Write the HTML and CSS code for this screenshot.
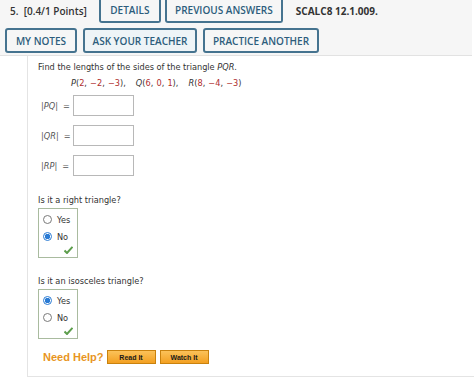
FILE: index.html
```html
<!DOCTYPE html>
<html lang="en">
<head>
    <meta charset="UTF-8">
    <title>SCALC8 12.1.009</title>
    <link rel="stylesheet" href="styles.css">
</head>
<body>
    <div class="header">
        <div class="head-row top">
            <span class="points">5.&nbsp; [0.4/1 Points]</span>
            <span class="btn w-details">DETAILS</span>
            <span class="btn w-prev">PREVIOUS ANSWERS</span>
            <span class="code">SCALC8 12.1.009.</span>
        </div>
        <div class="head-row">
            <span class="btn w-notes">MY NOTES</span>
            <span class="btn light w-ask">ASK YOUR TEACHER</span>
            <span class="btn w-practice">PRACTICE ANOTHER</span>
        </div>
    </div>

    <div class="question">
        <p class="prompt">Find the lengths of the sides of the triangle <i>PQR</i>.</p>
        <p class="points-line">
            <i>P</i>(<span class="num">2</span>, <span class="num">&minus;2</span>, <span class="num">&minus;3</span>),
            <span class="sp"></span><i>Q</i>(<span class="num">6</span>, <span class="num">0</span>, <span class="num">1</span>),
            <span class="sp"></span><i>R</i>(<span class="num">8</span>, <span class="num">&minus;4</span>, <span class="num">&minus;3</span>)
        </p>

        <div class="answer-row"><span class="label">|<i>PQ</i>|&nbsp; =</span><span class="box"></span></div>
        <div class="answer-row"><span class="label">|<i>QR</i>|&nbsp; =</span><span class="box"></span></div>
        <div class="answer-row"><span class="label">|<i>RP</i>|&nbsp; =</span><span class="box"></span></div>

        <p class="ask first">Is it a right triangle?</p>
        <div class="choices">
            <div class="choice"><span class="radio"></span>Yes</div>
            <div class="choice"><span class="radio on"></span>No</div>
            <svg class="check" width="9" height="8" viewBox="0 0 9 8"><path d="M0.5 4.5 L3 7 L8.5 0.8" fill="none" stroke="#5d9e4c" stroke-width="2"/></svg>
        </div>

        <p class="ask">Is it an isosceles triangle?</p>
        <div class="choices">
            <div class="choice"><span class="radio on"></span>Yes</div>
            <div class="choice"><span class="radio"></span>No</div>
            <svg class="check" width="9" height="8" viewBox="0 0 9 8"><path d="M0.5 4.5 L3 7 L8.5 0.8" fill="none" stroke="#5d9e4c" stroke-width="2"/></svg>
        </div>

        <div class="help">
            <span class="need">Need Help?</span>
            <span class="help-btn">Read It</span>
            <span class="help-btn">Watch It</span>
        </div>
    </div>
</body>
</html>
```

FILE: styles.css
```css
body {
    margin: 0;
    background: #ffffff;
    font-family: "Open Sans", "DejaVu Sans", sans-serif;
    color: #333333;
    overflow: hidden;
}
.header {
    width: 472px;
    height: 57px;
    background: #f6f6f6;
    border-bottom: 1px solid #e2e2e2;
}
.head-row {
    display: flex;
    align-items: center;
    gap: 6px;
    padding-left: 5px;
    height: 25px;
}
.head-row.top {
    margin-top: -2px;
    padding-left: 10px;
    margin-bottom: 5px;
    gap: 4px;
}
.points {
    font-size: 10px;
    font-weight: 600;
    color: #333333;
    margin-right: 8px;
}
.code {
    font-size: 10px;
    font-weight: 700;
    color: #333333;
    margin-left: 9px;
}
.btn {
    display: flex;
    align-items: center;
    justify-content: center;
    box-sizing: border-box;
    height: 25px;
    border: 2px solid #45738f;
    border-radius: 3px;
    background: #f6f6f6;
    color: #2d5d7c;
    font-size: 10px;
    font-weight: 600;
    white-space: nowrap;
}
.head-row.top .btn {
    border-top: none;
    border-radius: 0 0 3px 3px;
}
.btn.light {
    background: #eef4f7;
}
.w-details { width: 62px; }
.w-prev { width: 118px; }
.w-notes { width: 72px; }
.w-ask { width: 114px; }
.w-practice { width: 116px; }
.question {
    margin-left: 27px;
    border-left: 1px solid #e4e4e4;
    border-bottom: 1px solid #e4e4e4;
    padding: 6px 0 0 10px;
    height: 314px;
    font-family: "DejaVu Sans", Verdana, sans-serif;
    font-size: 8.2px;
    color: #333333;
}
.prompt {
    margin: 0;
    line-height: 11px;
}
.points-line {
    margin: 5px 0 0 33px;
    line-height: 11px;
    white-space: nowrap;
    word-spacing: 0.5px;
}
.num {
    color: #b02e2e;
}
.sp {
    display: inline-block;
    width: 7px;
}
.answer-row {
    display: flex;
    align-items: center;
    margin: 6px 0 0 3px;
    height: 21px;
}
.answer-row + .answer-row {
    margin-top: 9px;
}
.label {
    width: 32px;
    color: #555555;
}
.box {
    box-sizing: border-box;
    width: 61px;
    height: 21px;
    border: 1px solid #b8b8b8;
    background: #ffffff;
}
.ask {
    margin: 18px 0 0 0;
    line-height: 11px;
}
.ask.first {
    margin-top: 19px;
}
.choices {
    position: relative;
    width: 38px;
    height: 46px;
    margin-top: 2px;
    padding-top: 2px;
    border: 1px solid #a9bb9f;
}
.choice {
    display: flex;
    align-items: center;
    height: 17px;
    padding-left: 4px;
}
.radio {
    display: inline-block;
    width: 7px;
    height: 7px;
    border: 1px solid #7a7a7a;
    border-radius: 50%;
    margin-right: 5px;
    background: #ffffff;
}
.radio.on {
    border-color: #2a7bd4;
    background: radial-gradient(circle, #2a7bd4 0 2.5px, #ffffff 3px);
}
.check {
    position: absolute;
    right: 4px;
    bottom: 3px;
}
.help {
    display: flex;
    align-items: center;
    margin: 11px 0 0 5px;
    font-family: "Liberation Sans", Arial, sans-serif;
}
.need {
    color: #e8951e;
    font-size: 11px;
    font-weight: 700;
    margin-right: 3px;
}
.help-btn {
    display: flex;
    align-items: center;
    justify-content: center;
    width: 47px;
    height: 12px;
    margin-right: 4px;
    border: 1px solid #c9820e;
    background: linear-gradient(#fbc25a, #f3a021);
    color: #1a1a1a;
    font-size: 7px;
    font-weight: 700;
}
```
